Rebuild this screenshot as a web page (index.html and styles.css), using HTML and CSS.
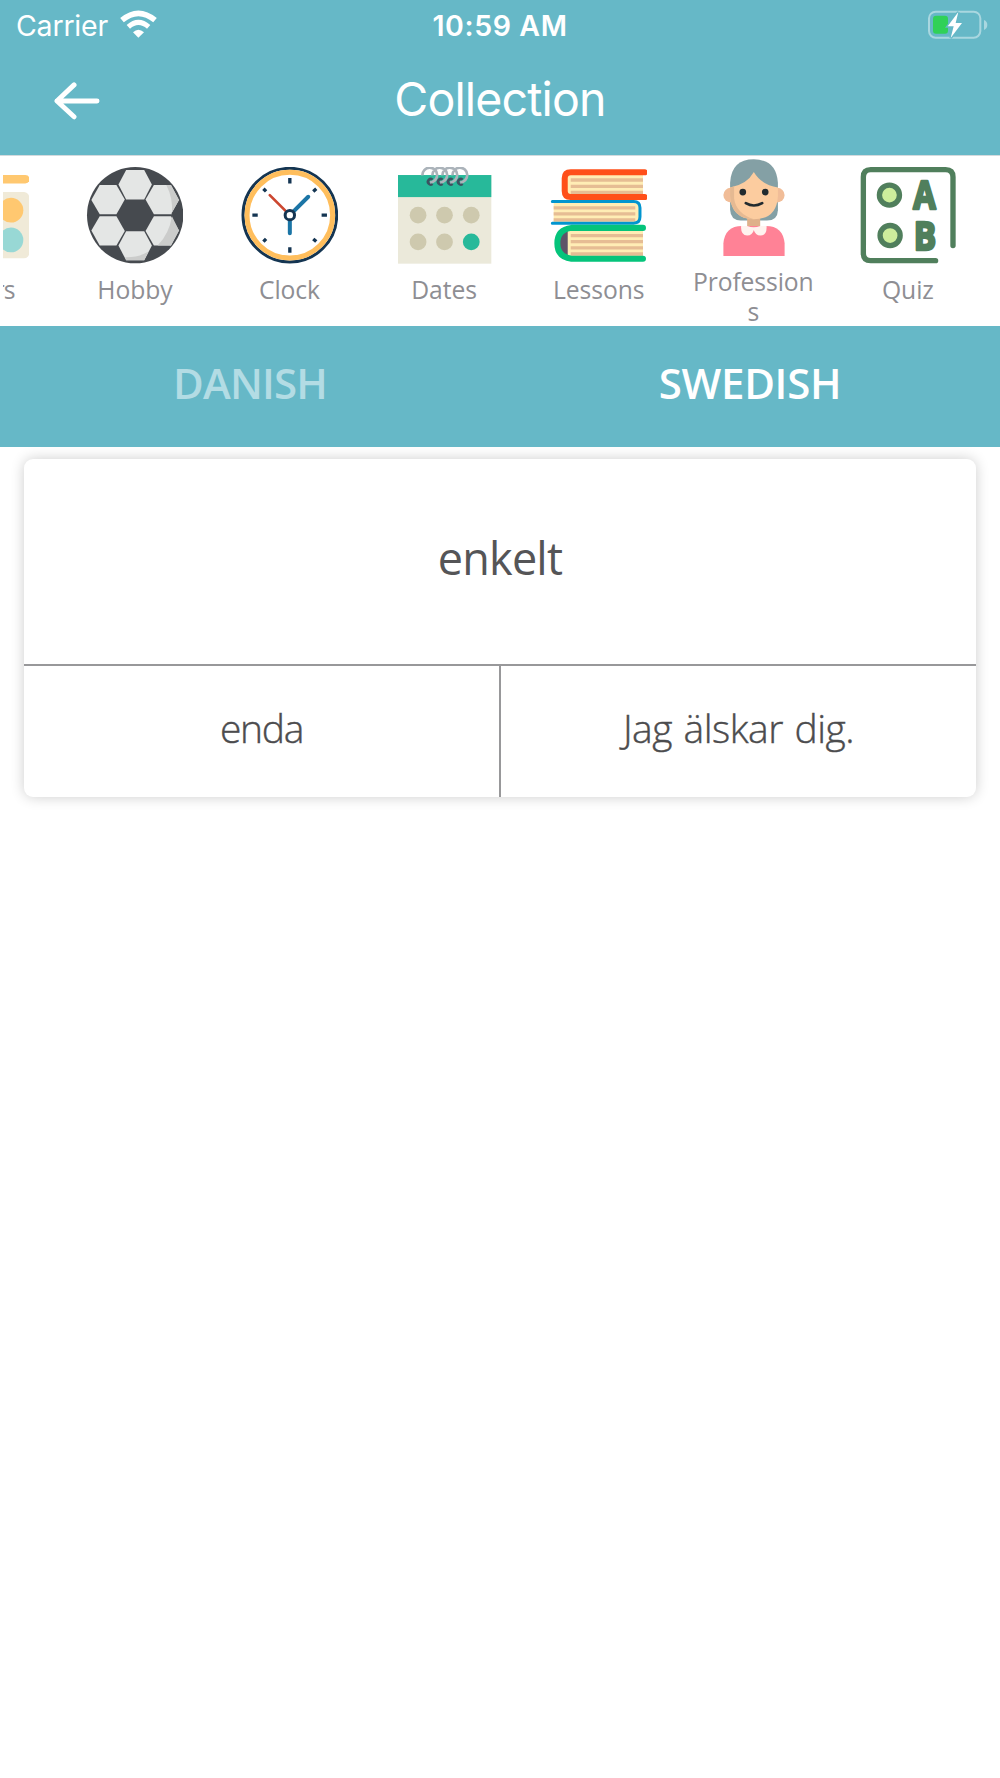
FILE: index.html
```html
<!DOCTYPE html>
<html lang="en">
<head>
  <meta charset="UTF-8" />
  <meta name="viewport" content="width=device-width, initial-scale=1.0" />
  <title>Collection</title>
  <link rel="stylesheet" href="styles.css">
</head>
<body>
  <header class="top">
    <div class="status-bar">
      <div class="carrier">
        <span class="carrier-name">Carrier</span>
        <svg class="wifi" viewBox="360 29 111 83">
          <path d="M366 59 Q415 18 465 59" fill="none" stroke="#fff" stroke-width="17" />
          <path d="M385 79 Q415 52 446 79" fill="none" stroke="#fff" stroke-width="15" />
          <path d="M399 95 Q415 80 432 95 L415 112 Z" fill="#fff" />
        </svg>
      </div>
      <span class="clock-time">10:59 AM</span>
      <svg class="battery" viewBox="144 28 180 90">
        <rect x="147" y="33" width="154" height="78" rx="20" fill="none" stroke="#a9d7e0" stroke-width="6" />
        <rect x="159" y="45" width="45" height="54" rx="9" fill="#30d158" />
        <path d="M312 58 Q322 62 322 73 Q322 83 312 88 Z" fill="#a9d7e0" />
        <path d="M235 34 L203 77 H221 L212 112 L246 67 H227 Z" fill="#fff" stroke="#66b8c7" stroke-width="8" paint-order="stroke" />
      </svg>
    </div>
    <div class="nav-bar">
      <svg class="back" viewBox="162 245 140 114">
        <path d="M223 253 L171 302 L223 350 M171 302 H293" fill="none" stroke="#fff" stroke-width="15" stroke-linecap="round" stroke-linejoin="round" />
      </svg>
      <h1>Collection</h1>
    </div>
  </header>

  <nav class="categories">
    <div class="category-row">
      <div class="category">
        <svg class="icon" viewBox="-204 51 290 290">
          <rect x="-204" y="75" width="291" height="25" rx="12" fill="#ffc870" />
          <rect x="-204" y="126" width="291" height="198" rx="16" fill="#f0ead8" />
          <circle cx="32" cy="180" r="37" fill="#ffc870" />
          <circle cx="32" cy="269" r="37" fill="#98d8d5" />
        </svg>
        <span>Colors</span>
      </div>
      <div class="category">
        <svg class="icon" viewBox="259 51 290 290">
          <circle cx="406" cy="195" r="144" fill="#464a4f" />
          <g fill="#e4e6e5">
            <path d="M379 60 H433 L456 103 L433 148 H379 L356 103 Z" />
            <path d="M379 243 H433 L456 286 L433 330 H379 L356 286 Z" />
            <path d="M300 105 H350 L375 148 L350 192 H300 L275 150 Z" />
            <path d="M300 198 H350 L375 242 L350 286 H300 L275 241 Z" />
            <path d="M462 105 H513 L537 150 L513 192 H462 L437 148 Z" />
            <path d="M462 198 H513 L537 241 L513 286 H462 L437 242 Z" />
          </g>
          <g fill="#cbcccb">
            <path d="M499 105 H513 L537 150 L513 192 H516 Q520 145 499 105 Z" />
            <path d="M516 198 L537 241 L513 286 H473 Q508 250 516 198 Z" />
            <path d="M446 304 L433 330 H379 L376 321 Q416 322 446 304 Z" />
          </g>
        </svg>
        <span>Hobby</span>
      </div>
      <div class="category">
        <svg class="icon" viewBox="64 51 290 290">
          <circle cx="210" cy="195" r="140" fill="#fff" stroke="#143552" stroke-width="9" />
          <circle cx="210" cy="195" r="128" fill="none" stroke="#ffbe5c" stroke-width="15" />
          <path d="M210 84 V100 M210 291 V307 M98 195 H114 M305 195 H321 M131 116 L139 124 M289 116 L280 124 M131 274 L139 266 M289 274 L280 266" stroke="#143552" stroke-width="10" />
          <g fill="none" stroke-linecap="round">
            <path d="M210 195 L265 140 M210 195 V249" stroke="#1b75a6" stroke-width="12" />
            <path d="M210 195 L150 135" stroke="#cc4730" stroke-width="8" />
          </g>
          <circle cx="210" cy="195" r="14" fill="#fff" stroke="#143552" stroke-width="9" />
        </svg>
        <span>Clock</span>
      </div>
      <div class="category">
        <svg class="icon" viewBox="48 51 290 290">
          <rect x="54" y="75" width="279" height="265" fill="#ebe9da" />
          <rect x="54" y="75" width="279" height="66" fill="#27b99a" />
          <g fill="#cec9ae">
            <circle cx="114" cy="195" r="25" />
            <circle cx="193" cy="195" r="25" />
            <circle cx="273" cy="195" r="25" />
            <circle cx="114" cy="275" r="25" />
            <circle cx="193" cy="275" r="25" />
          </g>
          <circle cx="273" cy="275" r="25" fill="#27b99a" />
          <g fill="none" stroke-width="8">
            <path d="M157 89 A8 8 0 1 0 157 101 M187 89 A8 8 0 1 0 187 101 M217 89 A8 8 0 1 0 217 101 M247 89 A8 8 0 1 0 247 101" stroke="#3c5260" />
            <path d="M127 76 A22 22 0 1 1 150 97 M157 76 A22 22 0 1 1 180 97 M187 76 A22 22 0 1 1 210 97 M217 76 A22 22 0 1 1 240 97" stroke="#abb3ba" />
          </g>
        </svg>
        <span>Dates</span>
      </div>
      <div class="category">
        <svg class="icon" viewBox="60 51 290 290">
          <rect x="106" y="70" width="232" height="68" fill="#ffedb5" />
          <path d="M122 90 H338 M122 109 H338 M122 127 H338" stroke="#e6bd94" stroke-width="10" />
          <path d="M343 67 H122 Q104 67 104 85 V123 Q104 141 122 141 H343" fill="none" stroke="#ff4f19" stroke-width="18" stroke-linecap="round" />
          <rect x="71" y="158" width="255" height="60" fill="#ffedb5" />
          <path d="M71 173 H315 M71 191 H315 M71 209 H315" stroke="#e6bd94" stroke-width="10" />
          <path d="M67 154 H310 Q329 154 329 173 V200 Q329 219 310 219 H67" fill="none" stroke="#0295cf" stroke-width="9" stroke-linecap="round" />
          <path d="M122 236 Q82 242 82 279 Q82 316 122 321 Z" fill="#5f5368" />
          <rect x="113" y="237" width="225" height="82" fill="#ffedb5" />
          <path d="M122 256 H338 M122 274 H338 M122 293 H338 M122 311 H338" stroke="#e6bd94" stroke-width="10" />
          <path d="M338 233 H124 Q82 238 82 279 Q82 320 124 325 H338" fill="none" stroke="#05c47b" stroke-width="18" stroke-linecap="round" />
        </svg>
        <span>Lessons</span>
      </div>
      <div class="category two-line">
        <svg class="icon" viewBox="75 27 290 290">
          <path d="M150 98 Q154 28 221 28 Q288 28 293 98 V180 Q292 211 260 211 H182 Q151 210 150 178 Z" fill="#84a0a5" />
          <circle cx="152" cy="135" r="22" fill="#f1bd98" />
          <circle cx="291" cy="135" r="22" fill="#f1bd98" />
          <rect x="201" y="195" width="39" height="42" fill="#dfb18b" />
          <path d="M150 112 Q200 104 221 66 Q243 104 293 112 V138 Q289 207 221 207 Q154 205 150 138 Z" fill="#fccc9f" />
          <path d="M150 112 L162 109 V145 Q168 190 221 207 Q154 205 150 138 Z" fill="#e5b992" />
          <circle cx="188" cy="126" r="10" fill="#222b2f" />
          <circle cx="255" cy="126" r="10" fill="#222b2f" />
          <path d="M197 159 Q221 173 246 159" fill="none" stroke="#222b2f" stroke-width="8" stroke-linecap="round" />
          <path d="M130 318 V280 Q134 227 186 227 H257 Q309 227 313 280 V318 Z" fill="#ff8296" />
          <path d="M183 227 H201 Q221 235 240 227 H259 Q261 255 241 256 Q225 255 221 239 Q217 255 201 256 Q181 254 183 227 Z" fill="#fff3ef" />
        </svg>
        <span>Profession<br>s</span>
      </div>
      <div class="category">
        <svg class="icon" viewBox="58 51 290 290">
          <path d="M339 286 V81 Q339 59 317 59 H93 Q71 59 71 81 V309 Q71 331 93 331 H287" fill="none" stroke="#507f5c" stroke-width="16" stroke-linecap="round" />
          <g fill="#cdee9c" stroke="#507f5c" stroke-width="16">
            <circle cx="149" cy="135" r="30" />
            <circle cx="151" cy="256" r="30" />
          </g>
          <text class="quiz-letter" x="220" y="178" textLength="67" lengthAdjust="spacingAndGlyphs">A</text>
          <text class="quiz-letter" x="222" y="299" textLength="67" lengthAdjust="spacingAndGlyphs">B</text>
        </svg>
        <span>Quiz</span>
      </div>
    </div>
  </nav>

  <div class="tabs">
    <div class="tab">DANISH</div>
    <div class="tab active">SWEDISH</div>
  </div>

  <main class="card">
    <div class="question">enkelt</div>
    <div class="answers">
      <div class="answer">enda</div>
      <div class="answer">Jag älskar dig.</div>
    </div>
  </main>
</body>
</html>
```
FILE: styles.css
```css
* {
  box-sizing: border-box;
}

body {
  margin: 0;
  min-height: 100vh;
  background: #fff;
  font-family: "Open Sans", sans-serif;
  color: #4c4c4e;
}

.top {
  height: 156px;
  background: #66b8c7;
  border-bottom: 1px solid #d3dadd;
  color: #fff;
  font-family: Inter, sans-serif;
}

.status-bar {
  display: grid;
  grid-template-columns: 1fr auto 1fr;
  align-items: center;
  height: 50px;
  padding: 0 12px;
  font-size: 28.5px;
}

.carrier {
  display: flex;
  align-items: center;
  gap: 12px;
  padding-left: 4px;
  letter-spacing: -0.2px;
}

.wifi {
  width: 37px;
  height: 28px;
  margin-bottom: 2px;
}

.clock-time {
  font-weight: 600;
  letter-spacing: 0.6px;
}

.battery {
  width: 60px;
  height: 30px;
  justify-self: end;
}

.nav-bar {
  display: grid;
  grid-template-columns: 1fr auto 1fr;
  align-items: center;
  height: 100px;
  padding: 0 54px;
}

.back {
  width: 46px;
  height: 38px;
  margin-top: 1px;
}

h1 {
  margin: -2px 0 0;
  font-size: 46.5px;
  font-weight: 400;
  letter-spacing: -0.85px;
}

.categories {
  height: 170px;
  margin-left: 3px;
  overflow: hidden;
}

.category-row {
  display: flex;
  margin-left: -100px;
}

.category {
  flex: 0 0 154.6px;
  display: flex;
  flex-direction: column;
  align-items: center;
  padding-top: 11px;
  color: #8e8e93;
  font-size: 24.7px;
  letter-spacing: -0.1px;
  line-height: 30px;
  text-align: center;
}

.category:first-child {
  letter-spacing: -0.7px;
}

.category.two-line {
  padding-top: 3px;
}

.icon {
  width: 97px;
  height: 97px;
  margin-bottom: 11px;
}

.quiz-letter {
  fill: #507f5c;
  stroke: #507f5c;
  stroke-width: 8px;
  stroke-linejoin: round;
  font-size: 120px;
  font-weight: 700;
}

.tabs {
  position: relative;
  z-index: 1;
  display: flex;
  height: 121px;
  background: #66b8c7;
}

.tab {
  flex: 1;
  color: #b3dce4;
  font-size: 42px;
  font-weight: 600;
  letter-spacing: -0.8px;
  line-height: 114px;
  text-align: center;
}

.tab.active {
  color: #fff;
  letter-spacing: -0.3px;
}

.card {
  margin: 12px 24px 0;
  border-radius: 9px;
  box-shadow: 0 0 14px rgba(0, 0, 0, 0.2);
}

.question {
  height: 207px;
  border-bottom: 2px solid #98989a;
  color: #555557;
  font-size: 45px;
  letter-spacing: -0.8px;
  line-height: 197px;
  text-align: center;
}

.answers {
  display: flex;
  height: 131px;
}

.answer {
  flex: 1;
  font-size: 39px;
  font-weight: 300;
  letter-spacing: -1.3px;
  line-height: 124px;
  text-align: center;
  -webkit-text-stroke: 0.4px #4c4c4e;
}

.answer + .answer {
  border-left: 2px solid #98989a;
  letter-spacing: -0.5px;
  word-spacing: 2px;
}
```
